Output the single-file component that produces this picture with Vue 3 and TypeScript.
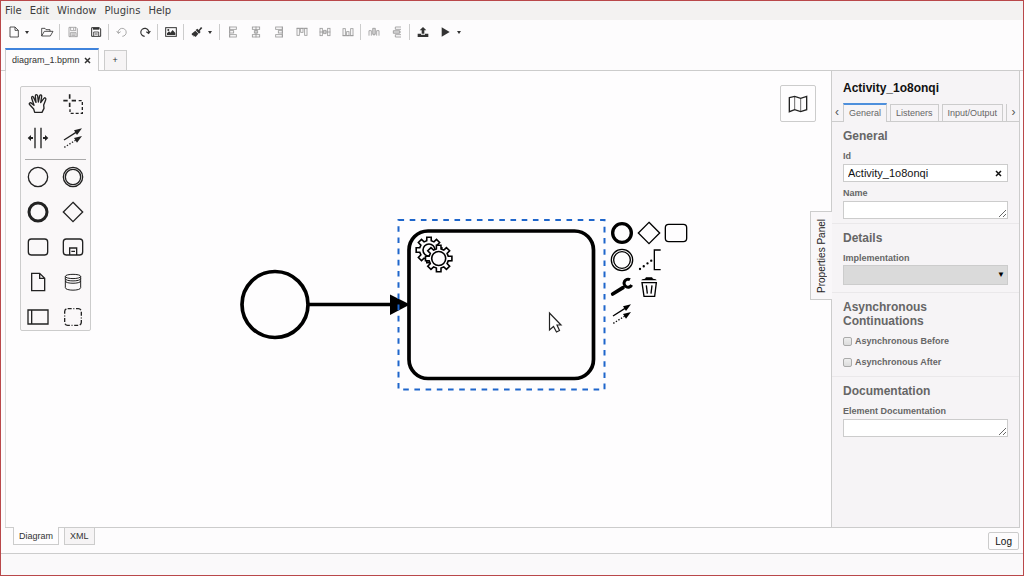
<script setup lang="ts">
import { ref } from 'vue'

interface Tool {
  label: string
  icon: string
  muted?: boolean
  menu?: boolean
}

const menus: string[] = ['File', 'Edit', 'Window', 'Plugins', 'Help']

const bars = (pts: number[][]): string =>
  pts.map(([x, y, w, h]) => `<rect x="${x}" y="${y}" width="${w}" height="${h}"/>`).join('')

const toolGroups: Tool[][] = [
  [
    { label: 'New diagram', icon: '<path d="M6 3H21L31 13V33H6ZM21 3V13H31"/>', menu: true },
    { label: 'Open diagram', icon: '<path d="M2 30V7H12L15 11H27V16M2 30L10 16H36L28 30Z"/>' },
  ],
  [
    {
      label: 'Save',
      icon: '<path d="M6 4H27L31 8V32H6Z"/><path d="M11 4V14H26V4M20 6V12M10 32V20H27V32M13 24H24M13 28H24"/>',
      muted: true,
    },
    {
      label: 'Save as',
      icon: '<path d="M5 5H28L32 9V31H5Z" stroke-width="3"/><path d="M9 8H28" stroke-width="6"/><path d="M11 30V18H26V30M14 24H23"/>',
    },
  ],
  [
    { label: 'Undo', icon: '<path d="M7 22A12 12 0 1 1 19 31M2 15L7 22L14 17"/>', muted: true },
    { label: 'Redo', icon: '<path d="M29 22A12 12 0 1 0 17 31M34 15L29 22L22 17" stroke-width="3.5"/>' },
  ],
  [
    {
      label: 'Export as image',
      icon: '<rect x="2" y="5" width="32" height="26" stroke-width="3"/><path class="solid" d="M6 27V22L12 16L16 20L23 12L31 21V27Z"/><circle class="solid" cx="10" cy="12" r="3"/>',
    },
  ],
  [
    {
      label: 'Set element color',
      icon: '<path class="solid" d="M2 23L13 14L22 23L14 33L10 30L8 32L7 28L3 28Z"/><path class="solid" d="M14 12L19 8L23 12L30 3L34 6L26 15L29 18L24 23Z"/>',
      menu: true,
    },
  ],
  [
    { label: 'Align left', muted: true, icon: '<path d="M8 2V34"/>' + bars([[8, 3, 20, 7], [8, 14, 12, 7], [8, 26, 20, 7]]) },
    { label: 'Align center', muted: true, icon: '<path d="M18 2V34"/>' + bars([[7, 3, 22, 7], [13, 14, 10, 7], [7, 26, 22, 7]]) },
    { label: 'Align right', muted: true, icon: '<path d="M28 2V34"/>' + bars([[8, 3, 20, 7], [16, 14, 12, 7], [8, 26, 20, 7]]) },
    { label: 'Align top', muted: true, icon: '<path d="M2 7H34"/>' + bars([[3, 7, 7, 21], [14, 7, 7, 12], [26, 7, 7, 21]]) },
    { label: 'Align middle', muted: true, icon: '<path d="M2 18H34"/>' + bars([[3, 7, 7, 22], [14, 13, 7, 10], [26, 7, 7, 22]]) },
    { label: 'Align bottom', muted: true, icon: '<path d="M2 29H34"/>' + bars([[3, 8, 7, 21], [14, 17, 7, 12], [26, 8, 7, 21]]) },
  ],
  [
    { label: 'Distribute horizontally', muted: true, icon: '<path d="M3 29V14H10V29M14 25V7H22V25ZM18 7V29M26 29V14H33V29"/>' },
    { label: 'Distribute vertically', muted: true, icon: '<path d="M30 3H13V10H30M26 14H7V22H26ZM7 18H30M30 26H13V33H30"/>' },
  ],
  [
    { label: 'Deploy current diagram', icon: '<path class="solid" d="M18 3L28 13H22V23H14V13H8ZM2 23H12V26H24V23H34V33H2Z"/>' },
    { label: 'Start current diagram', icon: '<path class="solid" d="M5 4L29 18L5 32Z"/>', menu: true },
  ],
]

const connectIcon =
  '<path d="M6 39L42 16"/><path d="M7 61L42 39" stroke-dasharray="4 5"/><path class="solid" d="M60 4L45 24L36 10ZM60 27L45 47L36 33Z"/>'

const paletteTools: Tool[] = [
  {
    label: 'Hand tool',
    icon: '<path stroke-linejoin="round" d="M23 58L20 48L9 36Q5 32 8 30Q11 28 15 32L21 37L14 16Q13 11 16 10Q19 10 20 14L27 28L25 9Q25 5 28 5Q31 5 32 9L34 27L38 9Q39 5 42 6Q45 7 44 11L41 29L50 17Q53 13 55 15Q58 17 56 21L50 36L51 46L45 58Z"/>',
  },
  {
    label: 'Lasso tool',
    icon: '<path d="M23 4V17M23 29V42M4 23H17M29 23H42" stroke-width="5"/><path d="M50 23H61V61H24V49" stroke-dasharray="9 6"/>',
  },
  {
    label: 'Space tool',
    icon: '<path d="M24 2V64M42 2V64"/><path class="solid" d="M2 33L12 24V30H18V36H12V42ZM64 33L54 24V30H48V36H54V42Z"/>',
  },
  { label: 'Global connect tool', icon: connectIcon },
]

const paletteShapes: Tool[] = [
  { label: 'Start event', icon: '<circle cx="33" cy="33" r="29"/>' },
  { label: 'Intermediate event', icon: '<circle cx="33" cy="33" r="29"/><circle cx="33" cy="33" r="23"/>' },
  { label: 'End event', icon: '<circle cx="33" cy="33" r="27" stroke-width="9"/>' },
  { label: 'Gateway', icon: '<path d="M33 4L62 33L33 62L4 33Z"/>' },
  { label: 'Task', icon: '<rect x="4" y="9" width="58" height="48" rx="9"/>' },
  {
    label: 'Expanded sub-process',
    icon: '<rect x="4" y="9" width="58" height="48" rx="9"/><path d="M23 57V36H44V57M28 46H39"/>',
  },
  { label: 'Data object', icon: '<path d="M14 7H38L53 22V59H14ZM38 7V22H53"/>' },
  {
    label: 'Data store',
    icon: '<path stroke-width="3" d="M10 16V50C10 60 56 60 56 50V16C56 8 10 8 10 16C10 25 56 25 56 16M10 23C10 32 56 32 56 23M10 30C10 39 56 39 56 30"/>',
  },
  { label: 'Participant', icon: '<path d="M3 12H63V54H3ZM14 12V54"/>' },
  {
    label: 'Group',
    icon: '<rect x="8" y="8" width="50" height="50" rx="9" stroke-dasharray="12 5 3 5 16 5"/>',
  },
]

const contextTools: (Tool | null)[] = [
  { label: 'Append end event', icon: '<circle cx="33" cy="33" r="28" stroke-width="10"/>' },
  { label: 'Append gateway', icon: '<path d="M33 1L65 33L33 65L1 33Z"/>' },
  { label: 'Append task', icon: '<rect x="1" y="7" width="64" height="52" rx="10"/>' },
  { label: 'Append intermediate event', icon: '<circle cx="33" cy="33" r="32"/><circle cx="33" cy="33" r="25"/>' },
  {
    label: 'Append text annotation',
    icon: '<path d="M68 3H49V62H68"/><path d="M6 60L41 34" stroke-width="7" stroke-linecap="round" stroke-dasharray="0 14"/>',
  },
  null,
  {
    label: 'Change type',
    icon: '<path d="M5 54L36 35" stroke-width="11" stroke-linecap="round"/><path d="M57 11A12 12 0 1 0 62 27" stroke-width="9"/>',
  },
  {
    label: 'Remove',
    icon: '<path class="solid" d="M10 13Q11 8 21 8L24 4H42L45 8Q55 8 56 13Z"/><path d="M12 20H55L50 61H18ZM25 28L28 53M42 28L39 53"/>',
  },
  null,
  { label: 'Connect', icon: connectIcon },
]

/** Outline of a cog with eight square teeth. */
function gear(cx: number, cy: number, outer: number, inner: number): string {
  const points: string[] = []
  for (let i = 0; i < 8; i++) {
    const a = (i * Math.PI) / 4
    const corners: [number, number][] = [
      [inner, -0.24],
      [outer, -0.17],
      [outer, 0.17],
      [inner, 0.24],
    ]
    for (const [r, d] of corners) {
      points.push(`${(cx + r * Math.cos(a + d)).toFixed(2)} ${(cy + r * Math.sin(a + d)).toFixed(2)}`)
    }
  }
  return `M${points.join('L')}Z`
}

const backGear = gear(429, 250, 13, 9.5)
const frontGear = gear(438.7, 258.5, 13.4, 9.8)

const elementId = ref('Activity_1o8onqi')
const name = ref('')
const implementation = ref('')
const asyncBefore = ref(false)
const asyncAfter = ref(false)
const documentation = ref('')
const panelTabs: string[] = ['General', 'Listeners', 'Input/Output']
const activePanelTab = ref('General')
</script>

<template>
  <div class="window">
    <nav class="menubar" aria-label="Application menu">
      <button v-for="m in menus" :key="m" type="button">{{ m }}</button>
    </nav>

    <div class="toolbar" role="toolbar" aria-label="Tools">
      <div v-for="(group, g) in toolGroups" :key="g" class="tool-group">
        <template v-for="t in group" :key="t.label">
          <button type="button" class="tool" :class="{ muted: t.muted }" :aria-label="t.label">
            <svg viewBox="0 0 36 36" v-html="t.icon"></svg>
          </button>
          <button v-if="t.menu" type="button" class="caret" :aria-label="t.label + ' options'"></button>
        </template>
      </div>
    </div>

    <div class="file-tabs">
      <div class="file-tab">
        <span>diagram_1.bpmn</span>
        <button type="button" aria-label="Close tab">
          <svg viewBox="0 0 7 7"><path d="M1 1L6 6M6 1L1 6" /></svg>
        </button>
      </div>
      <button type="button" class="add-tab" aria-label="New tab">+</button>
    </div>

    <main class="workspace">
      <section class="canvas" aria-label="Diagram canvas">
        <svg class="diagram" aria-hidden="true">
          <g transform="translate(-6 -71)">
            <circle class="shape" cx="275" cy="304.5" r="33" />
            <path class="shape" d="M308 304.5H392" />
            <rect class="shape" x="409" y="231" width="184.5" height="147.5" rx="19" />
            <path d="M390 294.5L410 304.5L390 315Z" />
            <path class="gear" :d="backGear" />
            <circle class="gear" cx="429" cy="250" r="6" />
            <path class="gear" :d="frontGear" />
            <circle class="gear" cx="438.7" cy="258.5" r="7" />
            <rect class="selection" x="398.5" y="220" width="206" height="169.5" />
            <path class="pointer" d="M549.5 313V330L553.5 326.5L556.5 332L559.5 330.5L557 325H561Z" />
          </g>
        </svg>

        <div class="palette">
          <div class="palette-group">
            <button v-for="t in paletteTools" :key="t.label" type="button" :aria-label="t.label">
              <svg viewBox="0 0 66 66" v-html="t.icon"></svg>
            </button>
          </div>
          <div class="palette-group shapes">
            <button v-for="t in paletteShapes" :key="t.label" type="button" :aria-label="t.label">
              <svg viewBox="0 0 66 66" v-html="t.icon"></svg>
            </button>
          </div>
        </div>

        <div class="context-pad">
          <template v-for="(t, i) in contextTools" :key="i">
            <button v-if="t" type="button" :aria-label="t.label">
              <svg viewBox="0 0 66 66" v-html="t.icon"></svg>
            </button>
            <span v-else></span>
          </template>
        </div>

        <button type="button" class="minimap" aria-label="Open minimap">
          <svg viewBox="0 0 54 48">
            <path d="M1 5L17 1L35 7L53 1V41L35 47L17 41L1 47Z" />
            <path class="fold" d="M17 1V41M35 7V47" />
          </svg>
        </button>
      </section>

      <aside class="panel" aria-label="Properties">
        <button type="button" class="panel-toggle"><span>Properties Panel</span></button>
        <h1>{{ elementId }}</h1>
        <div class="panel-tabs">
          <button type="button" class="scroll" aria-label="Previous tabs">‹</button>
          <button
            v-for="t in panelTabs"
            :key="t"
            type="button"
            class="panel-tab"
            :class="{ active: t === activePanelTab }"
            @click="activePanelTab = t"
          >{{ t }}</button>
          <i class="cut-tab"></i>
          <button type="button" class="scroll" aria-label="Next tabs">›</button>
        </div>

        <section class="group">
          <h2>General</h2>
          <label for="el-id">Id</label>
          <div class="id-field">
            <input id="el-id" v-model="elementId" type="text" />
            <button type="button" aria-label="Clear id">
              <svg viewBox="0 0 7 7"><path d="M1 1L6 6M6 1L1 6" /></svg>
            </button>
          </div>
          <label for="el-name">Name</label>
          <textarea id="el-name" v-model="name" rows="1"></textarea>
        </section>

        <section class="group">
          <h2>Details</h2>
          <label for="el-impl">Implementation</label>
          <div class="select">
            <select id="el-impl" v-model="implementation">
              <option value=""></option>
            </select>
          </div>
        </section>

        <section class="group">
          <h2>Asynchronous Continuations</h2>
          <div class="check">
            <input id="async-before" v-model="asyncBefore" type="checkbox" />
            <label for="async-before">Asynchronous Before</label>
          </div>
          <div class="check">
            <input id="async-after" v-model="asyncAfter" type="checkbox" />
            <label for="async-after">Asynchronous After</label>
          </div>
        </section>

        <section class="group">
          <h2>Documentation</h2>
          <label for="el-doc">Element Documentation</label>
          <textarea id="el-doc" v-model="documentation" rows="1"></textarea>
        </section>
      </aside>
    </main>

    <div class="view-tabs">
      <button type="button" class="view-tab active">Diagram</button>
      <button type="button" class="view-tab">XML</button>
      <button type="button" class="log">Log</button>
    </div>
    <footer class="status"></footer>
  </div>
</template>

<style>
body {
  margin: 0;
}
</style>

<style scoped>
* {
  box-sizing: border-box;
}
.window {
  display: flex;
  flex-direction: column;
  min-height: 100vh;
  border: 1px solid #b9484a;
  background: #fdfcfd;
  color: #333;
  font-family: 'Liberation Sans', Arial, sans-serif;
  font-size: 9px;
}
button {
  margin: 0;
  padding: 0;
  border: 0;
  background: none;
  color: inherit;
  font: inherit;
}
svg {
  display: block;
  overflow: visible;
  fill: none;
  stroke: currentColor;
}
svg :deep(.solid) {
  fill: currentColor;
  stroke: none;
}

.menubar {
  display: flex;
  height: 19px;
  background: #f3f2f1;
  color: #3c3c3c;
  font-family: 'DejaVu Sans', 'Noto Sans', sans-serif;
  font-size: 10px;
}
.menubar button {
  padding: 0 4px 1px;
}

.toolbar {
  display: flex;
  align-items: flex-start;
  height: 28px;
  padding: 4px 1px 0;
}
.tool-group {
  display: flex;
  align-items: center;
  height: 16px;
  padding: 0 1px;
  border-left: 1px solid #ccc;
}
.tool-group:first-child {
  padding-left: 0;
  border-left: 0;
}
.tool {
  display: grid;
  place-items: center;
  width: 23px;
  height: 16px;
  color: #333;
}
.tool.muted {
  color: #999;
}
.tool svg {
  width: 12px;
  height: 12px;
  stroke-width: 2.5;
}
.caret {
  width: 10px;
  height: 16px;
}
.caret::before {
  content: '';
  display: block;
  width: 0;
  border: 2px solid transparent;
  border-top: 3px solid #333;
  border-bottom: 0;
}

.file-tabs {
  display: flex;
  align-items: flex-end;
  gap: 5px;
  height: 23px;
  padding: 0 4px;
  border-bottom: 1px solid #ccc;
}
.file-tab {
  display: flex;
  align-items: center;
  gap: 4px;
  height: 23px;
  margin-bottom: -1px;
  padding: 0 7px 1px 6px;
  border: 1px solid #ccc;
  border-top: 2px solid #3f83dc;
  border-bottom: 0;
  background: #fdfcfd;
}
.file-tab svg {
  width: 7px;
  height: 7px;
  stroke-width: 1.5;
}
.add-tab {
  width: 23px;
  height: 20px;
  padding-bottom: 2px;
  border: 1px solid #ccc;
  border-bottom: 0;
  background: #f6f4f5;
}

.workspace {
  display: flex;
  flex: 1;
  margin: 0 3px 0 4px;
  border-bottom: 1px solid #ccc;
}
.canvas {
  position: relative;
  flex: 1;
  min-width: 0;
  border-left: 1px solid #ddd;
  background: #fefdfe;
}
.diagram {
  width: 100%;
  height: 100%;
  color: #000;
  fill: #000;
  stroke: none;
}
.shape {
  fill: #fefdfe;
  stroke: #000;
  stroke-width: 3.7;
}
.gear {
  fill: #fefdfe;
  stroke: #000;
  stroke-width: 1.6;
}
.selection {
  fill: none;
  stroke: #1f66cb;
  stroke-width: 2;
  stroke-dasharray: 5.6 5.6;
}
.pointer {
  fill: #fff;
  stroke: #222;
  stroke-width: 1.2;
}

.palette {
  position: absolute;
  top: 15px;
  left: 14px;
  width: 71px;
  border: 1px solid #ccc;
  border-radius: 2px;
  background: #faf8f9;
  color: #222;
}
.palette-group {
  display: grid;
  grid-template-columns: 1fr 1fr;
  grid-auto-rows: 34px;
}
.palette-group.shapes {
  grid-auto-rows: 35px;
  margin: 4px 0 -4px;
  background: linear-gradient(#aaa, #aaa) 4px 0 / 61px 1px no-repeat;
}
.palette button,
.context-pad button {
  display: grid;
  place-items: center;
}
.palette svg,
.context-pad svg {
  width: 22px;
  height: 22px;
  stroke-width: 4;
}

.context-pad {
  position: absolute;
  top: 148px;
  left: 602px;
  display: grid;
  grid-template-columns: repeat(3, 27px);
  grid-auto-rows: 27px;
  color: #000;
}

.minimap {
  position: absolute;
  top: 14px;
  right: 15px;
  display: grid;
  place-items: center;
  width: 36px;
  height: 37px;
  border: 1px solid #ccc;
  border-radius: 2px;
  background: #fefdfe;
  color: #222;
}
.minimap svg {
  width: 18px;
  height: 16px;
  stroke-width: 4;
}
.minimap .fold {
  stroke-width: 2;
}

.panel {
  position: relative;
  width: 189px;
  margin-top: -1px;
  border: 1px solid #ccc;
  border-bottom: 0;
  background: #f6f4f6;
  color: #666;
}
.panel-toggle {
  position: absolute;
  top: 140px;
  left: -22px;
  display: grid;
  place-items: center;
  width: 22px;
  height: 89px;
  border: 1px solid #ccc;
  border-right: 0;
  background: #f9f7f9;
  color: #222;
  font-size: 10px;
}
.panel-toggle span {
  writing-mode: vertical-rl;
  transform: rotate(180deg);
}
h1 {
  margin: 0;
  padding: 10px 11px 8px;
  color: #111;
  font-size: 12px;
  line-height: 14px;
}
.panel-tabs {
  display: flex;
  align-items: flex-end;
  gap: 3px;
  height: 19px;
  border-bottom: 1px solid #ccc;
}
.panel-tab {
  height: 17px;
  padding: 0 5px;
  border: 1px solid #ccc;
  border-bottom: 0;
  white-space: nowrap;
}
.panel-tab.active {
  height: 19px;
  margin-bottom: -1px;
  padding-bottom: 1px;
  border-top: 2px solid #4d8fdc;
  background: #f6f4f6;
}
.scroll {
  width: 8px;
  height: 19px;
  padding-right: 1px;
  color: #555;
  font-size: 12px;
  line-height: 16px;
  text-align: right;
}
.cut-tab {
  width: 1px;
  height: 17px;
  background: #ccc;
}
.cut-tab + .scroll {
  text-align: center;
}

.group {
  display: flex;
  flex-direction: column;
  padding: 7px 11px 4px;
}
.group + .group {
  border-top: 1px solid #eae8ea;
}
h2 {
  margin: 0 0 8px;
  font-size: 12px;
  line-height: 14px;
}
label {
  font-weight: bold;
  line-height: 10px;
}
input[type='text'],
textarea,
select {
  display: block;
  width: 100%;
  margin: 0;
  border: 1px solid #ccc;
  border-radius: 0;
  background: #fff;
  color: #111;
  font: inherit;
  outline: 0;
}
.id-field,
textarea {
  margin-top: 3px;
}
.id-field {
  display: flex;
  position: relative;
  margin-bottom: 6px;
}
.id-field input {
  height: 18px;
  padding: 0 20px 0 4px;
  font-size: 11px;
}
.id-field button {
  position: absolute;
  top: 6px;
  right: 6px;
  color: #111;
}
.id-field svg {
  width: 7px;
  height: 7px;
  stroke-width: 1.5;
}
textarea {
  height: 18px;
  padding: 2px 4px;
  resize: vertical;
}
.select {
  position: relative;
  margin: 2px 0 3px;
}
select {
  height: 20px;
  appearance: none;
  background: #dadada;
}
.select::after {
  content: '▼';
  position: absolute;
  top: 5px;
  right: 3px;
  color: #000;
  font-size: 8px;
  line-height: 10px;
  pointer-events: none;
}
.check {
  display: flex;
  align-items: center;
  gap: 3px;
  height: 10px;
  margin-bottom: 11px;
}
.check:last-child {
  margin-bottom: 5px;
}
.check input {
  width: 9px;
  height: 9px;
  margin: 0;
  appearance: none;
  border: 1px solid #aaa;
  border-radius: 2px;
  background: linear-gradient(#eee, #dcdcdc);
}

.view-tabs {
  display: flex;
  align-items: flex-start;
  gap: 5px;
  height: 25px;
  padding: 0 4px 0 12px;
}
.view-tab {
  height: 17px;
  padding: 0 5px;
  border: 1px solid #ccc;
  border-top: 0;
  background: #f6f4f5;
}
.view-tab.active {
  height: 18px;
  margin-top: -1px;
  background: #fefdfe;
}
.log {
  height: 18px;
  margin: 4px 0 0 auto;
  padding: 0 6px;
  border: 1px solid #ccc;
  border-radius: 2px;
  color: #111;
  font-size: 10px;
}
.status {
  height: 22px;
  border-top: 1px solid #ccc;
  background: #faf9fa;
}
</style>
